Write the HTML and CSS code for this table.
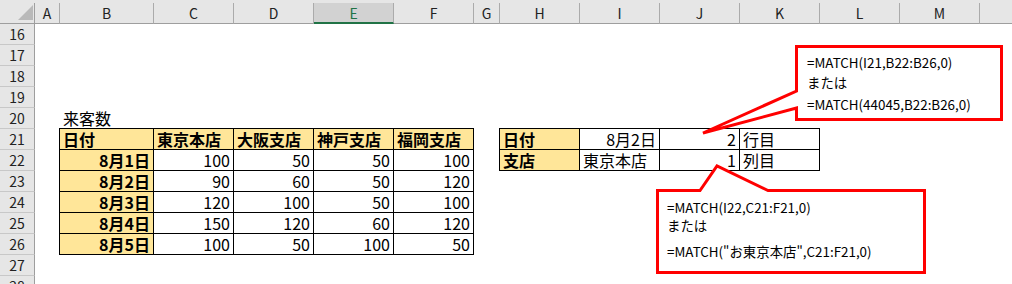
FILE: index.html
```html
<!DOCTYPE html>
<html lang="ja">
<head>
    <meta charset="utf-8">
    <title>MATCH関数</title>
    <link rel="stylesheet" href="styles.css">
</head>
<body>
    <div class="sheet">
        <!-- column letters -->
        <div class="cols grid">
            <div class="corner"></div>
            <div class="ch">A</div>
            <div class="ch">B</div>
            <div class="ch">C</div>
            <div class="ch">D</div>
            <div class="ch sel">E</div>
            <div class="ch">F</div>
            <div class="ch">G</div>
            <div class="ch">H</div>
            <div class="ch">I</div>
            <div class="ch">J</div>
            <div class="ch">K</div>
            <div class="ch">L</div>
            <div class="ch">M</div>
            <div class="ch"></div>
        </div>

        <!-- rows 16 - 28 -->
        <div class="cells grid">
            <div class="rh">16</div>
            <div class="rh">17</div>
            <div class="rh">18</div>
            <div class="rh">19</div>

            <div class="rh">20</div>
            <div class="b label">来客数</div>

            <div class="rh">21</div>
            <div class="b t hd top left">日付</div>
            <div class="t hd top">東京本店</div>
            <div class="t hd top">大阪支店</div>
            <div class="t hd top">神戸支店</div>
            <div class="t hd top">福岡支店</div>
            <div class="h t hd top left">日付</div>
            <div class="t top num">8月2日</div>
            <div class="t top num">2</div>
            <div class="t top">行目</div>

            <div class="rh">22</div>
            <div class="b t hd left num">8月1日</div>
            <div class="t num">100</div>
            <div class="t num">50</div>
            <div class="t num">50</div>
            <div class="t num">100</div>
            <div class="h t hd left">支店</div>
            <div class="t">東京本店</div>
            <div class="t num">1</div>
            <div class="t">列目</div>

            <div class="rh">23</div>
            <div class="b t hd left num">8月2日</div>
            <div class="t num">90</div>
            <div class="t num">60</div>
            <div class="t num">50</div>
            <div class="t num">120</div>

            <div class="rh">24</div>
            <div class="b t hd left num">8月3日</div>
            <div class="t num">120</div>
            <div class="t num">100</div>
            <div class="t num">50</div>
            <div class="t num">100</div>

            <div class="rh">25</div>
            <div class="b t hd left num">8月4日</div>
            <div class="t num">150</div>
            <div class="t num">120</div>
            <div class="t num">60</div>
            <div class="t num">120</div>

            <div class="rh">26</div>
            <div class="b t hd left num">8月5日</div>
            <div class="t num">100</div>
            <div class="t num">50</div>
            <div class="t num">100</div>
            <div class="t num">50</div>

            <div class="rh">27</div>
            <div class="rh">28</div>
        </div>

        <!-- speech bubbles -->
        <svg class="shapes" width="1012" height="284" viewBox="0 0 1012 284">
            <path d="M796.5 46.5 H1001.5 V119.5 H796.5 V108 L703 133 L796.5 91 Z"/>
            <path d="M657.5 190.5 H700 L717 166 L768 190.5 H924.5 V272.5 H657.5 Z"/>
        </svg>
        <div class="note note-row">
            <div>=MATCH(I21,B22:B26,0)</div>
            <div>または</div>
            <div class="gap">=MATCH(44045,B22:B26,0)</div>
        </div>
        <div class="note note-col">
            <div>=MATCH(I22,C21:F21,0)</div>
            <div>または</div>
            <div class="gap">=MATCH("お東京本店",C21:F21,0)</div>
        </div>
    </div>
</body>
</html>
```

FILE: styles.css
```css
* {
    box-sizing: border-box;
}
body {
    margin: 0;
    background: #fff;
    color: #000;
    font-family: "Noto Sans CJK JP", sans-serif;
}
.sheet {
    position: relative;
    width: 1012px;
    height: 284px;
    overflow: hidden;
}
.grid {
    display: grid;
    grid-template-columns: 35px 25px 94px repeat(4, 80px) 26px repeat(6, 80px) 1fr;
}

/* headers */
.cols {
    background: #e6e6e6;
    padding-top: 3px;
}
.ch, .corner {
    height: 21px;
    border-right: 1px solid #ababab;
    border-bottom: 1px solid #9e9e9e;
    font-size: 14px;
    line-height: 20px;
    text-align: center;
    color: #222;
}
.ch:last-child {
    border-right: none;
}
.ch.sel {
    background: #d2d2d2;
    border-bottom: 2px solid #217346;
    color: #217346;
}
.corner {
    position: relative;
    border-right-color: #9e9e9e;
}
.corner::after {
    content: "";
    position: absolute;
    right: 1px;
    bottom: 3px;
    border-left: 15px solid transparent;
    border-bottom: 15px solid #b9b9b9;
}
.rh {
    grid-column: 1;
    background: #e6e6e6;
    border-right: 1px solid #9e9e9e;
    border-bottom: 1px solid #c8c8c8;
    font-size: 14px;
    text-align: center;
    color: #222;
}

/* cells */
.cells {
    grid-auto-rows: 21px;
    font-size: 16px;
    line-height: 20px;
}
.b {
    grid-column: 3;
}
.h {
    grid-column: 9;
}
.label {
    padding-left: 3px;
    white-space: nowrap;
}
.t {
    border-right: 1px solid #000;
    border-bottom: 1px solid #000;
    padding: 0 3px;
    white-space: nowrap;
}
.top {
    box-shadow: 0 -1px 0 #000;
}
.left {
    box-shadow: -1px 0 0 #000;
}
.top.left {
    box-shadow: 0 -1px 0 #000, -1px 0 0 #000, -1px -1px 0 #000;
}
.hd {
    background: #ffe699;
    font-weight: bold;
}
.num {
    text-align: right;
}

/* bubbles */
.shapes {
    position: absolute;
    left: 0;
    top: 0;
}
.shapes path {
    fill: #fff;
    stroke: #f00;
    stroke-width: 3;
}
.note {
    position: absolute;
    font-size: 13.4px;
    white-space: nowrap;
}
.note-row {
    left: 807px;
    top: 52px;
    line-height: 20px;
}
.note-row .gap {
    margin-top: 2px;
}
.note-col {
    left: 667px;
    top: 198px;
    line-height: 18px;
}
.note-col .gap {
    margin-top: 8px;
}
```
